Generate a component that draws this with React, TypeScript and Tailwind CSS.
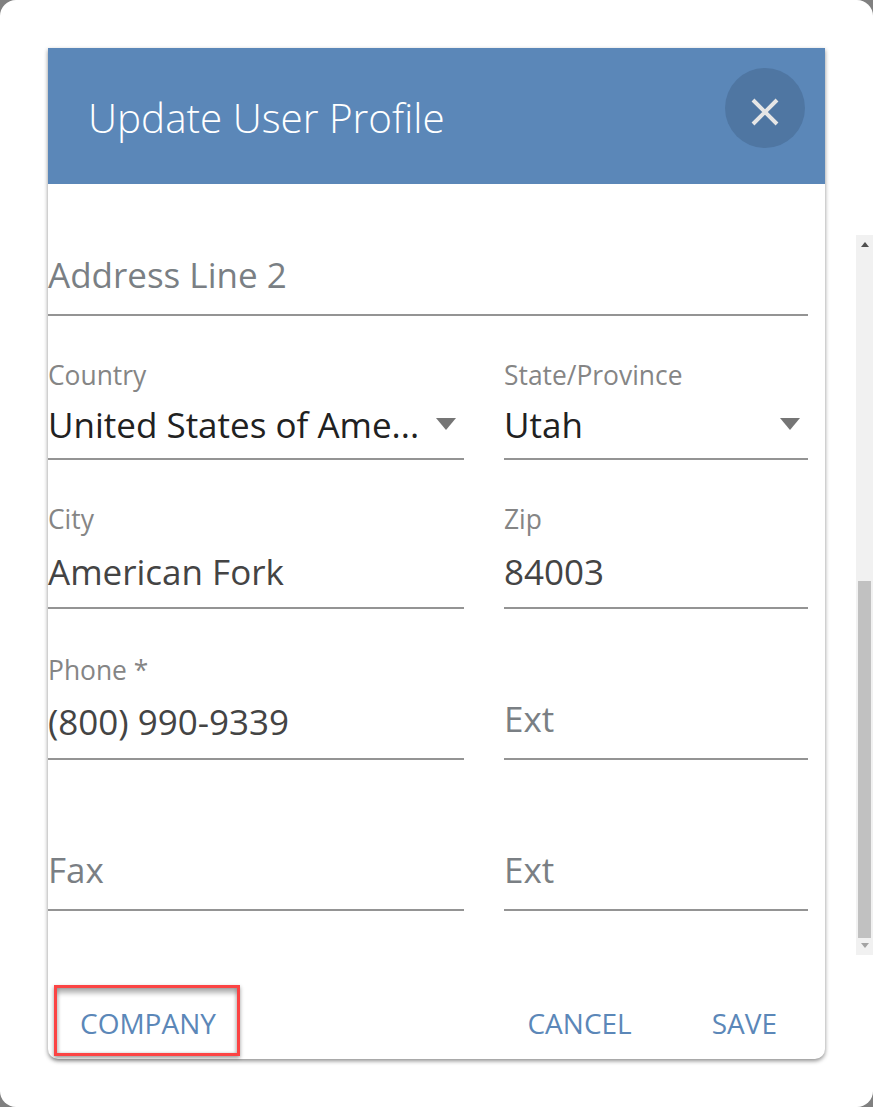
const labelClass = "text-[26.4px] leading-[34px] text-[#858585]";
const valueClass = "text-[35px] leading-[48px] text-[#444]";
const placeholderClass = "text-[35px] leading-[48px] text-[#7a7f84]";

function Caret() {
  return (
    <svg width="20" height="12" viewBox="0 0 20 12" className="shrink-0">
      <path d="M0 0h20L10 12z" fill="#757575" />
    </svg>
  );
}

function Field({
  label,
  value,
  placeholder,
  caret,
  className,
  labelGap = "mb-[12px]",
  inputPad = "pb-[11px]",
}: {
  label?: string;
  value?: string;
  placeholder?: string;
  caret?: boolean;
  className: string;
  labelGap?: string;
  inputPad?: string;
}) {
  return (
    <div className={className}>
      {label && <p className={`${labelClass} ${labelGap}`}>{label}</p>}
      <div className={`flex items-center justify-between border-b-2 border-[#949494] ${inputPad}`}>
        {value ? (
          <span className={caret ? "text-[35px] leading-[48px] text-[#212121]" : valueClass}>{value}</span>
        ) : (
          <span className={placeholderClass}>{placeholder}</span>
        )}
        {caret && (
          <span className="mr-[8px] -mt-[2px]">
            <Caret />
          </span>
        )}
      </div>
    </div>
  );
}

export default function App() {
  return (
    <div className="relative h-[1107px] w-[873px] overflow-hidden bg-[#808080] font-['Open_Sans',sans-serif]">
      <div className="flex h-full rounded-[16px] bg-white pl-[48px] pt-[48px]">
        {/* Card */}
        <div className="flex h-[1011px] w-[777px] shrink-0 flex-col rounded-b-[10px] bg-white shadow-[0_2px_4px_rgba(0,0,0,0.45)]">
          <div className="flex h-[136px] justify-between bg-[#5b87b8] pl-[40px] pr-[20px]">
            <h1 className="mt-[42px] text-[40.4px] leading-[56px] font-light text-white">Update User Profile</h1>
            <button className="mt-[20px] flex h-[80px] w-[80px] items-center justify-center rounded-full bg-[#4f76a2]">
              <svg width="28" height="28" viewBox="0 0 28 28" className="mt-[8px]">
                <path d="M2 2l24 24M26 2L2 26" stroke="#e6e6e6" strokeWidth="4" />
              </svg>
            </button>
          </div>

          <div className="flex flex-1 flex-col pr-[17px] pt-[67px]">
            <Field placeholder="Address Line 2" inputPad="pb-[15px]" className="mb-[42px]" />
            <div className="mb-[42px] flex gap-[40px]">
              <Field label="Country" value="United States of Ame..." caret labelGap="mb-[9px]" inputPad="pb-[9px]" className="w-[416px]" />
              <Field label="State/Province" value="Utah" caret labelGap="mb-[9px]" inputPad="pb-[9px]" className="flex-1" />
            </div>
            <div className="mb-[44px] flex gap-[40px]">
              <Field label="City" value="American Fork" className="w-[416px]" />
              <Field label="Zip" value="84003" className="flex-1" />
            </div>
            <div className="mb-[86px] flex items-end gap-[40px]">
              <Field label="Phone *" value="(800) 990-9339" labelGap="mb-[11px]" inputPad="pb-[12px]" className="w-[416px]" />
              <Field placeholder="Ext" inputPad="pb-[15px]" className="flex-1" />
            </div>
            <div className="flex gap-[40px]">
              <Field placeholder="Fax" inputPad="pb-[15px]" className="w-[416px]" />
              <Field placeholder="Ext" inputPad="pb-[15px]" className="flex-1" />
            </div>
          </div>

          <div className="flex items-center justify-between pb-[15px] pl-[32px] pr-[48px] text-[28px] text-[#5b87b8]">
            <span>COMPANY</span>
            <div className="flex gap-[80px]">
              <span>CANCEL</span>
              <span>SAVE</span>
            </div>
          </div>
        </div>

        {/* Scrollbar */}
        <div className="ml-[31px] mt-[187px] flex h-[720px] w-[17px] flex-col items-center bg-[#f1f1f1]">
          <svg width="8" height="5" viewBox="0 0 8 5" className="mt-[7px]">
            <path d="M4 0l4 5H0z" fill="#505050" />
          </svg>
          <div className="mt-[334px] h-[357px] w-[13px] bg-[#c1c1c1]" />
          <svg width="8" height="5" viewBox="0 0 8 5" className="mt-[5px]">
            <path d="M0 0h8L4 5z" fill="#a3a3a3" />
          </svg>
        </div>
      </div>

      {/* Annotation box over the COMPANY button */}
      <div className="absolute left-[54px] top-[985px] h-[71px] w-[186px] border-[3px] border-[#fb4444] shadow-[inset_0_6px_5px_-1px_rgba(0,0,0,0.3),inset_-2px_0_3px_rgba(0,0,0,0.12),inset_2px_0_3px_rgba(0,0,0,0.12),0_2px_4px_rgba(0,0,0,0.4)]" />
    </div>
  );
}
